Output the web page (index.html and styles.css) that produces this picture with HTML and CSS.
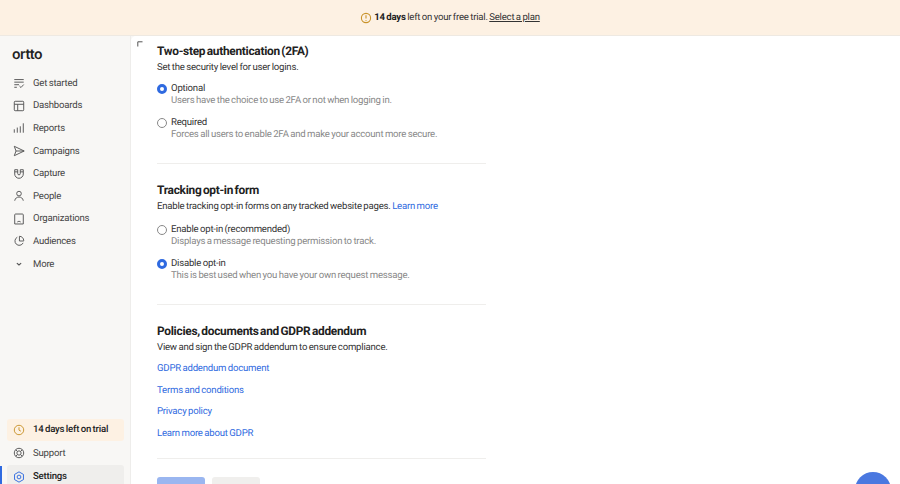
FILE: index.html
```html
<!DOCTYPE html>
<html lang="en">
<head>
<meta charset="utf-8">
<title>Settings</title>
<link rel="stylesheet" href="styles.css">
</head>
<body>
<div class="banner">
  <svg class="banner-icon" viewBox="0 0 12 12"><circle cx="6" cy="6" r="4.600"/><path d="M6 3.200v3.400M6 8v.8"/></svg>
  <span><b>14 days</b> left on your free trial. <u>Select a plan</u></span>
</div>
<div class="app">
  <aside class="sidebar">
    <div class="logo">ortto</div>
    <nav class="nav">
      <a class="item"><svg viewBox="0 0 14 14"><path d="M1.500 3h11M1.500 6h11M1.500 9h5.500M1.500 12h3M7.500 10.500l1.800 1.800 3.200-3.500"/></svg>Get started</a>
      <a class="item"><svg viewBox="0 0 14 14"><rect x="1.500" y="1.500" width="11" height="11" rx="1"/><path d="M1.500 5h11M5.500 5v7.500"/></svg>Dashboards</a>
      <a class="item"><svg viewBox="0 0 14 14"><path d="M1.500 8.500v4M5 6.500v6M8.500 5v7.500M12 1.500v11"/></svg>Reports</a>
      <a class="item"><svg viewBox="0 0 14 14"><path d="M1.500 1.500L13 7 1.500 12.500 3.500 7zM3.500 7H13"/></svg>Campaigns</a>
      <a class="item"><svg viewBox="0 0 14 14"><path d="M2 2h3.500v4.500a1.500 1.500 0 003 0V2H12v5a5 5 0 01-10 0zM2 4.500h3.500M8.500 4.500H12"/></svg>Capture</a>
      <a class="item"><svg viewBox="0 0 14 14"><circle cx="7" cy="4.200" r="2.700"/><path d="M2 12.500c.5-3 2.700-4.300 5-4.300s4.500 1.300 5 4.300"/></svg>People</a>
      <a class="item"><svg viewBox="0 0 14 14"><path d="M2 12.800V2.200a1 1 0 011-1h8a1 1 0 011 1v10.600zM5 10.500c1.200-1 2.800-1 4 0M5 5.500h.01M9 5.500h.01"/></svg>Organizations</a>
      <a class="item"><svg viewBox="0 0 14 14"><path d="M5 2.600a5 5 0 106.800 6.600M7.500 1.500a5 5 0 015 5V7h-5z"/></svg>Audiences</a>
      <a class="item"><svg class="chev" viewBox="0 0 14 14"><path d="M4.500 6l2.500 2.200L9.500 6"/></svg>More</a>
    </nav>
    <div class="nav-bottom">
      <a class="item trial"><svg viewBox="0 0 14 14"><circle cx="7" cy="7" r="5.500"/><path d="M7 3.800v3.400l2.200 1.200"/></svg>14 days left on trial</a>
      <a class="item"><svg viewBox="0 0 14 14"><circle cx="7" cy="7" r="5.500"/><circle cx="7" cy="7" r="2.500"/><path d="M3.200 3.200l2 2M10.800 3.200l-2 2M3.200 10.800l2-2M10.800 10.800l-2-2"/></svg>Support</a>
      <a class="item active"><svg viewBox="0 0 14 14"><path d="M7 1l5.200 3v6L7 13l-5.200-3V4z"/><circle cx="7" cy="7" r="2.200"/></svg>Settings</a>
    </div>
  </aside>
  <main class="main">
    <svg class="corner" viewBox="0 0 6 6"><path d="M.8 5.500V.8h4.700"/></svg>
    <div class="content">
      <section class="section">
        <h2>Two-step authentication (2FA)</h2>
        <p class="lead">Set the security level for user logins.</p>
        <div class="options">
          <div class="option"><span class="radio on"></span><div><div class="label">Optional</div><div class="hint">Users have the choice to use 2FA or not when logging in.</div></div></div>
          <div class="option"><span class="radio"></span><div><div class="label">Required</div><div class="hint">Forces all users to enable 2FA and make your account more secure.</div></div></div>
        </div>
      </section>
      <section class="section">
        <h2>Tracking opt-in form</h2>
        <p class="lead lead-link">Enable tracking opt-in forms on any tracked website pages. <a class="link">Learn more</a></p>
        <div class="options">
          <div class="option"><span class="radio"></span><div><div class="label">Enable opt-in (recommended)</div><div class="hint">Displays a message requesting permission to track.</div></div></div>
          <div class="option"><span class="radio on"></span><div><div class="label">Disable opt-in</div><div class="hint">This is best used when you have your own request message.</div></div></div>
        </div>
      </section>
      <section class="section">
        <h2>Policies, documents and GDPR addendum</h2>
        <p class="lead">View and sign the GDPR addendum to ensure compliance.</p>
        <div class="links">
          <a class="link">GDPR addendum document</a>
          <a class="link">Terms and conditions</a>
          <a class="link">Privacy policy</a>
          <a class="link">Learn more about GDPR</a>
        </div>
      </section>
      <div class="actions">
        <span class="btn primary"></span>
        <span class="btn secondary"></span>
      </div>
    </div>
    <span class="chat"></span>
  </main>
</div>
</body>
</html>
```
FILE: styles.css
```css
* { box-sizing: border-box; }
html, body { margin: 0; height: 484px; overflow: hidden; }
body {
  font-family: Roboto, "Liberation Sans", sans-serif;
  font-size: 9.600px;
  letter-spacing: -0.220px;
  word-spacing: -0.600px;
  text-rendering: geometricPrecision;
  color: #333;
  background: #f8f7f5;
}
.banner {
  height: 36px;
  background: #fdf1e3;
  border-bottom: 1px solid #eee9e2;
  display: flex;
  align-items: center;
  justify-content: center;
  gap: 2px;
  color: #333;
}
.banner b { color: #222; font-weight: 700; }
.banner-icon { width: 12px; height: 12px; fill: none; stroke: #c9932a; stroke-width: 1.100; }
.app { display: flex; height: 448px; }
.sidebar {
  width: 131px;
  flex: none;
  display: flex;
  flex-direction: column;
  border-right: 1px solid #eeedeb;
}
.logo {
  font-family: Inter, sans-serif;
  font-size: 14px;
  font-weight: 600;
  letter-spacing: -0.400px;
  color: #222;
  margin: 11px 0 0 12px;
  height: 16px;
  line-height: 16px;
}
.nav { margin-top: 9px; display: flex; flex-direction: column; }
.item {
  display: flex;
  align-items: center;
  height: 22.600px;
  padding-left: 13px;
  margin-right: 6px;
  gap: 8px;
  color: #444;
}
.item svg { width: 12px; height: 12px; flex: none; fill: none; stroke: #555; stroke-width: 1.100; }
.item svg.chev { stroke-width: 1.400; }
.nav-bottom { margin-top: auto; margin-bottom: -4px; display: flex; flex-direction: column; gap: 1px; }
.trial { background: #fdf1e3; margin-left: 7px; padding-left: 6px; border-radius: 3px; color: #222; font-weight: 500; height: 22px; }
.trial svg { stroke: #c9932a; }
.active { position: relative; background: #efeeec; margin-left: 7px; padding-left: 6px; border-radius: 3px; font-weight: 500; color: #222; }
.active svg { stroke: #2f6ae0; }
.active::before { content: ""; position: absolute; left: -7px; top: 1px; bottom: 0; width: 2px; background: #2f6ae0; }
.main {
  flex: 1;
  position: relative;
  background: #fff;
  border-top-left-radius: 5px;
  overflow: hidden;
}
.corner { position: absolute; left: 6px; top: 5px; width: 6px; height: 6px; fill: none; stroke: #555; stroke-width: 1; }
.content { width: 329px; margin-left: 26px; padding-top: 7px; }
.section { border-bottom: 1px solid #efeeec; }
.section + .section { padding-top: 18px; }
h2 { margin: 0; font-size: 11.900px; line-height: 16px; font-weight: 700; color: #222; letter-spacing: -0.280px; word-spacing: -1.200px; }
.lead { margin: 2px 0 0; line-height: 14px; color: #333; }
.lead-link { padding-bottom: 2px; }
.link { color: #2f6ae0; }
.options { margin-top: 8px; padding-bottom: 22px; display: flex; flex-direction: column; gap: 10px; }
.option { display: flex; gap: 4px; }
.radio { width: 10px; height: 10px; border: 1px solid #888; border-radius: 50%; margin-top: 1px; background: #fff; flex: none; }
.radio.on { border: 3px solid #2f6ae0; }
.label { line-height: 12px; color: #333; }
.hint { line-height: 12px; color: #888; }
.links { display: flex; flex-direction: column; gap: 7.500px; margin-top: 7px; padding-bottom: 17.500px; line-height: 14px; }
.actions { display: flex; gap: 7px; margin-top: 18px; }
.btn { width: 48px; height: 20px; border-radius: 3px; }
.primary { background: #9ab6f0; }
.secondary { background: #f0efed; }
.chat { position: absolute; right: 9px; top: 436px; width: 36px; height: 36px; border-radius: 50%; background: #4a78e0; }
```
